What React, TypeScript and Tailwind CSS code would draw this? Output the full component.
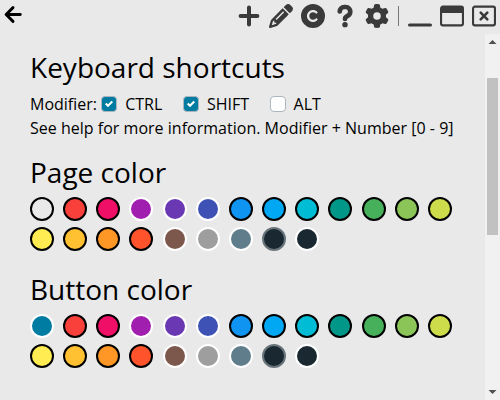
import React from "react";
import { FaArrowLeft, FaPencil, FaCopyright, FaQuestion, FaGear } from "react-icons/fa6";

const black = "border-black";
const white = "border-white";

type Swatch = [string, string];

const palette: Swatch[] = [
  ["bg-[#fa403b]", black],
  ["bg-[#ef0f66]", black],
  ["bg-[#a01fae]", white],
  ["bg-[#6a38b3]", white],
  ["bg-[#3e51b4]", white],
  ["bg-[#0f94f2]", black],
  ["bg-[#00a8f3]", black],
  ["bg-[#00bcd4]", black],
  ["bg-[#009688]", black],
  ["bg-[#47b05b]", black],
  ["bg-[#8bc558]", black],
  ["bg-[#cddc4b]", black],
  ["bg-[#ffec52]", black],
  ["bg-[#ffc032]", black],
  ["bg-[#ff9726]", black],
  ["bg-[#ff532c]", black],
  ["bg-[#7c574b]", white],
  ["bg-[#9e9e9e]", white],
  ["bg-[#607d8b]", white],
  ["bg-[#1a2931]", "border-[#69747b]"],
  ["bg-[#1a2931]", white],
];

function Swatches({ first }: { first: Swatch }) {
  return (
    <div className="grid w-fit grid-cols-[repeat(13,24px)] gap-x-[9.16px] gap-y-[6px]">
      {[first, ...palette].map(([fill, edge], i) => (
        <button key={i} className={`size-6 rounded-full border-2 ${fill} ${edge}`} />
      ))}
    </div>
  );
}

function Check({ label, checked }: { label: string; checked?: boolean }) {
  return (
    <label className="flex items-center">
      <span
        className={`mr-2 flex size-4 items-center justify-center rounded-[4px] border border-[#adb5bd] ${
          checked ? "bg-[#007ba1]" : "bg-white"
        }`}
      >
        {checked && (
          <svg viewBox="0 0 8 8" className="size-2" fill="#fff">
            <path d="M6.564.75l-3.59 3.612-1.538-1.55L0 4.26l2.974 2.99L8 2.193z" />
          </svg>
        )}
      </span>
      {label}
    </label>
  );
}

function Stroked({ width, children }: { width: number; children: React.ReactNode }) {
  return (
    <svg
      className="size-6"
      viewBox="0 0 24 24"
      fill="none"
      stroke="currentColor"
      strokeWidth={width}
      strokeLinecap="round"
    >
      {children}
    </svg>
  );
}

export default function App() {
  return (
    <div className="flex h-[400px] w-[500px] flex-col overflow-hidden bg-[#e9e9e9] font-['Open_Sans','Noto_Sans',sans-serif] text-base leading-6 text-black">
      <header className="flex h-[34px] shrink-0 items-start pr-1 pt-1">
        <svg
          className="ml-1 mt-px h-[19px] w-[18px]"
          viewBox="0 0 18 19"
          fill="none"
          stroke="currentColor"
          strokeWidth="2.9"
          strokeLinecap="round"
          strokeLinejoin="round"
        >
          <path d="M9 2.6L2.1 9.5L9 16.4M2.6 9.5H16.3" />
        </svg>
        <div className="ml-auto flex gap-2 text-2xl text-[#3a3a3a]">
          <Stroked width={4}>
            <path d="M12 3.6V20.4M3.6 12H20.4" />
          </Stroked>
          <FaPencil />
          <FaCopyright />
          <FaQuestion className="overflow-visible stroke-current stroke-[36px]" />
          <FaGear />
          <div className="-ml-px -mr-px mt-0.5 flex h-5 w-[5px] justify-center">
            <div className="w-px bg-[#777]" />
          </div>
          <Stroked width={3}>
            <path d="M1.5 21H22.5" />
          </Stroked>
          <Stroked width={2.1}>
            <rect x="1.05" y="2.6" width="21.9" height="18.8" rx="1.8" />
            <path d="M1.5 3H22.5V9H1.5z" fill="currentColor" stroke="none" />
          </Stroked>
          <Stroked width={2.1}>
            <rect x="1.05" y="2.6" width="21.9" height="18.8" rx="1.8" />
            <path d="M8.7 8.7L15.3 15.3M15.3 8.7L8.7 15.3" strokeWidth="2.6" />
          </Stroked>
        </div>
      </header>
      <div className="flex min-h-0 flex-1">
        <main className="flex-1 pl-[30px] pt-[16px]">
          <h1 className="mb-2 text-[28px] leading-[34px]">Keyboard shortcuts</h1>
          <div className="flex">
            <span className="mr-[4.2px]">Modifier:</span>
            <div className="flex gap-[20.6px]">
              <Check label="CTRL" checked />
              <Check label="SHIFT" checked />
              <Check label="ALT" />
            </div>
          </div>
          <p className="tracking-[0.015px]">See help for more information. Modifier + Number [0 - 9]</p>
          <h1 className="mb-2 mt-[15px] text-[28px] leading-[34px]">Page color</h1>
          <Swatches first={["bg-[#e9e9e9]", black]} />
          <h1 className="mb-2 mt-[21px] text-[28px] leading-[34px]">Button color</h1>
          <Swatches first={["bg-[#007ba1]", white]} />
        </main>
        <aside className="flex w-[15px] flex-col items-center bg-[#f1f1f1]">
          <svg className="h-[44px] w-[15px] shrink-0" viewBox="0 0 15 44" fill="#505050">
            <path d="M7.5 6L11.5 10H3.5z" />
          </svg>
          <div className="h-[157px] w-[11px] bg-[#c1c1c1]" />
          <svg className="mt-auto h-[15px] w-[15px]" viewBox="0 0 15 15" fill="#505050">
            <path d="M3.5 5H11.5L7.5 9z" />
          </svg>
        </aside>
      </div>
    </div>
  );
}
